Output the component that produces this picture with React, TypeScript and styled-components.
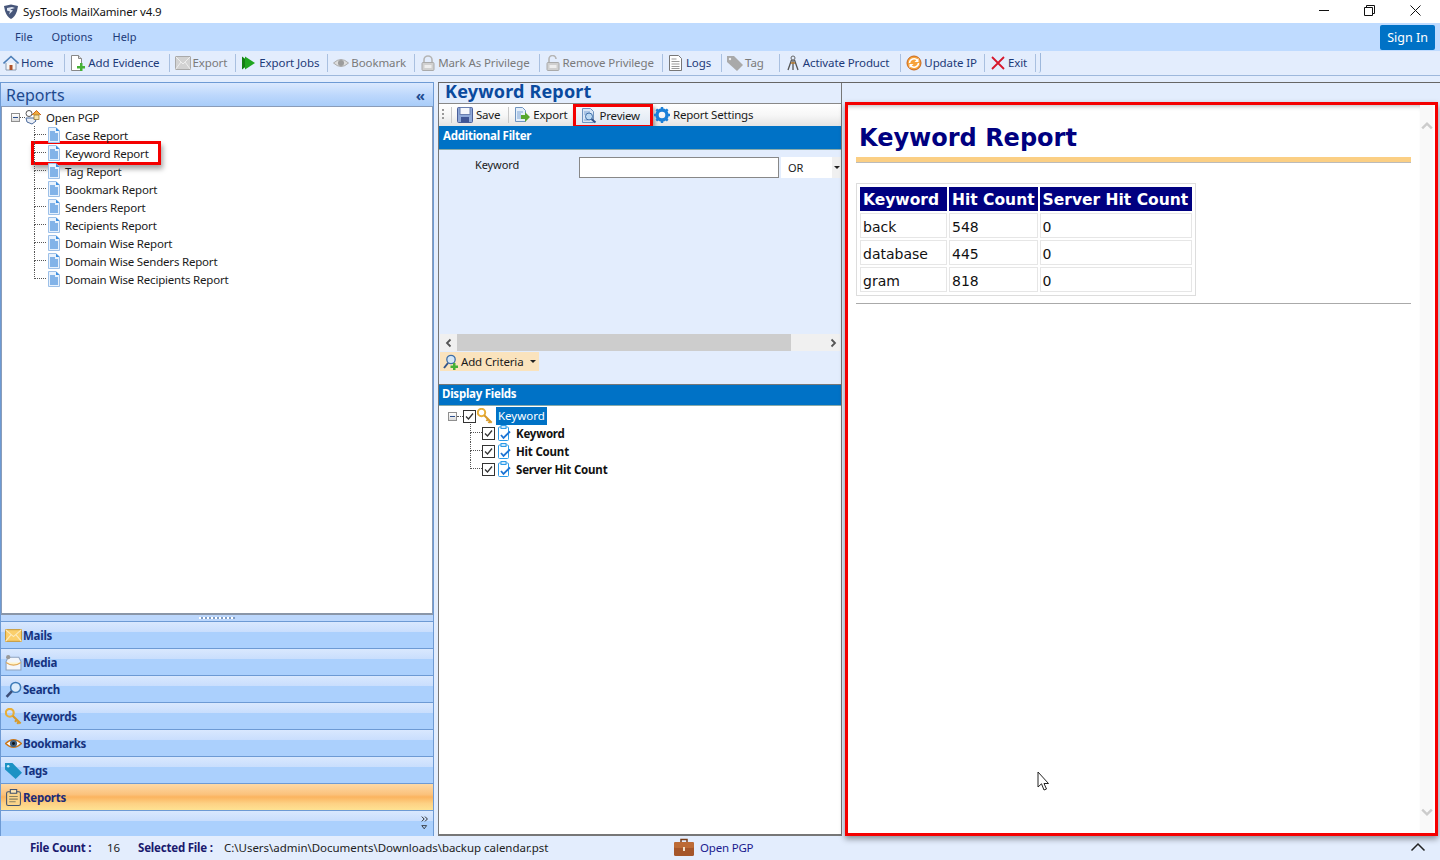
import React from 'react'
import styled, { createGlobalStyle } from 'styled-components'

const Ui = '"Noto Sans", "Open Sans", sans-serif'
const Navy = '#15337f'
const PaleBlue = '#e3edfd'
const Band = '#0072c6'
const Edge = '#6d9ad4'

const GlobalStyle = createGlobalStyle`
  html, body { margin: 0; padding: 0; height: 100%; overflow: hidden; }
  body { font-family: ${Ui}; font-size: 12px; background: ${PaleBlue}; color: #111; }
  #root { height: 100%; }
`

const Window = styled.div`
  position: relative;
  width: 1440px;
  height: 860px;
  display: flex;
  flex-direction: column;
  background: ${PaleBlue};
`

/* title bar */
const TitleBar = styled.div`
  height: 23px;
  flex: none;
  display: flex;
  align-items: center;
  background: #fff;
  padding: 0 2px 0 3px;
`
const TitleText = styled.span`
  margin-left: 4px;
  font-size: 11.5px;
  letter-spacing: -0.13px;
  color: #111;
`
const WindowControls = styled.div`
  margin: -3px 0 0 auto;
  display: flex;
`
const WindowControl = styled.div`
  width: 46px;
  height: 21px;
  display: flex;
  align-items: center;
  justify-content: center;
`

/* menu */
const MenuBar = styled.div`
  height: 28px;
  flex: none;
  display: flex;
  align-items: center;
  background: #bfdbff;
  padding: 0 5px 0 15px;
`
const MenuItem = styled.span<{ $gap: number }>`
  margin: -2px ${(p) => p.$gap}px 0 0;
  font-size: 11px;
  color: #1d3a78;
`
const SignIn = styled.div`
  margin-left: auto;
  width: 55px;
  height: 25px;
  display: flex;
  align-items: center;
  justify-content: center;
  border-radius: 2px;
  background: ${Band};
  color: #fff;
  font-size: 12.5px;
`

/* main toolbar */
const ToolBar = styled.div`
  height: 23px;
  flex: none;
  display: flex;
  align-items: center;
  padding: 0 0 1px 3px;
  border-bottom: 1px solid #9db8dc;
  background: ${PaleBlue};
`
const ToolItem = styled.div<{ $off?: boolean; $pad: number }>`
  display: flex;
  align-items: center;
  gap: 2px;
  height: 18px;
  padding-right: ${(p) => p.$pad}px;
  margin-right: 5px;
  border-right: 1px solid #a9c0e0;
  font-size: 11.5px;
  letter-spacing: -0.1px;
  color: ${(p) => (p.$off ? '#7a7a7a' : '#1d3a78')};
  white-space: nowrap;
`
const ToolBarEnd = styled.div`
  width: 2px;
  height: 20px;
  margin-left: -3px;
  border-right: 1px solid #9db8dc;
  border-radius: 0 0 3px 0;
`

/* workspace */
const Workspace = styled.div`
  flex: 1;
  min-height: 0;
  display: flex;
  padding-top: 6px;
`
const LeftPanel = styled.div`
  width: 434px;
  flex: none;
  display: flex;
  flex-direction: column;
  border-left: 1px solid ${Edge};
  border-right: 1px solid ${Edge};
  box-sizing: border-box;
`
const PanelHeader = styled.div`
  height: 25px;
  flex: none;
  box-sizing: border-box;
  display: flex;
  align-items: center;
  justify-content: space-between;
  padding: 0 8px 0 5px;
  border-top: 1px solid ${Edge};
  border-bottom: 1px solid #8a9cb8;
  background: linear-gradient(#dbe9fe, #bcd7fc 55%, #a9cdf9);
  color: #1e4a8f;
  font-size: 16px;
`
const Collapse = styled.span`
  font-size: 15px;
  font-weight: 700;
  color: #1e4a8f;
`
const TreePane = styled.div`
  flex: 1;
  min-height: 0;
  background: #fff;
  padding: 1px 0 0 9px;
  border-left: 1px solid #8a9cb8;
  border-right: 1px solid #8a9cb8;
  border-bottom: 2px solid #8a96a8;
`
const TreeRow = styled.div<{ $marked?: boolean }>`
  height: 18px;
  display: flex;
  align-items: center;
  width: fit-content;
  white-space: nowrap;
  font-size: 11.5px;
  letter-spacing: -0.2px;
  color: #1a1a1a;
  ${(p) =>
    p.$marked &&
    `
    padding-right: 9px;
    box-shadow: 0 0 0 3px #f40000, 2px 4px 5px 3px rgba(0,0,0,.35);
  `}
`
const ChildList = styled.div<{ $indent: number; $lift?: number }>`
  margin: ${(p) => -(p.$lift ?? 0)}px 0 0 ${(p) => p.$indent}px;
`
const Expander = styled.span`
  width: 9px;
  height: 9px;
  flex: none;
  box-sizing: border-box;
  display: flex;
  align-items: center;
  justify-content: center;
  border: 1px solid #8f8f8f;
  background: linear-gradient(#fff, #dcdcdc);
  &::before {
    content: '';
    width: 5px;
    height: 1px;
    background: #2c4f8c;
  }
`
const Connector = styled.span<{ $last?: boolean; $width: number }>`
  width: ${(p) => p.$width}px;
  height: 18px;
  flex: none;
  &::before {
    content: '';
    display: block;
    box-sizing: border-box;
    height: 9px;
    border-left: 1px dotted #555;
    border-bottom: 1px dotted #555;
  }
  &::after {
    content: '';
    display: ${(p) => (p.$last ? 'none' : 'block')};
    height: 9px;
    border-left: 1px dotted #555;
  }
`
const Dots = styled.span<{ $width: number }>`
  width: ${(p) => p.$width}px;
  height: 0;
  flex: none;
  border-top: 1px dotted #555;
`
const TreeLabel = styled.span<{ $gap: number }>`
  margin-left: ${(p) => p.$gap}px;
`
const Splitter = styled.div`
  height: 6px;
  flex: none;
  display: flex;
  justify-content: center;
  align-items: center;
  background: #bcd7fc;
  &::before {
    content: '';
    width: 36px;
    height: 2px;
    background: repeating-linear-gradient(90deg, #fff 0 2px, #7f9cc4 2px 4px);
  }
`
const NavItem = styled.div<{ $active?: boolean }>`
  height: 27px;
  flex: none;
  box-sizing: border-box;
  display: flex;
  align-items: center;
  gap: 1px;
  padding: 0 0 0 4px;
  border-top: 1px solid ${Edge};
  background: ${(p) =>
    p.$active
      ? 'linear-gradient(#fdd9a6, #fbc27c 40%, #fbb45f 50%, #fdd184 75%, #fee293)'
      : 'linear-gradient(#d9e8fe, #c9defd 38%, #abd0fd 40%, #abd0fd)'};
  font-size: 11.5px;
  font-weight: 700;
  letter-spacing: -0.25px;
  color: ${(p) => (p.$active ? '#1a2a78' : Navy)};
`
const NavOverflow = styled.div`
  height: 26px;
  flex: none;
  box-sizing: border-box;
  display: flex;
  flex-direction: column;
  align-items: flex-end;
  justify-content: flex-end;
  gap: 1px;
  padding: 0 4px 4px 0;
  border-top: 1px solid ${Edge};
  background: linear-gradient(#d9e8fe, #c9defd 38%, #abd0fd 40%, #abd0fd);
`

const RightArea = styled.div`
  flex: 1;
  min-width: 0;
  margin-left: 4px;
  display: flex;
  border-top: 1px solid #666;
`

/* middle column */
const MiddleColumn = styled.div`
  width: 404px;
  flex: none;
  box-sizing: border-box;
  display: flex;
  flex-direction: column;
  border-left: 1px solid #777;
  border-right: 1px solid #777;
  border-bottom: 2px solid #777;
`
const ReportTitle = styled.div`
  height: 20px;
  flex: none;
  padding-left: 6px;
  line-height: 16px;
  font-size: 18px;
  font-weight: 700;
  letter-spacing: 0.18px;
  color: #0a4a9e;
`
const ActionBar = styled.div`
  height: 23px;
  flex: none;
  box-sizing: border-box;
  display: flex;
  align-items: center;
  padding: 0 0 1px 3px;
  border-top: 1px solid #888;
  background: linear-gradient(#fff, #f7f7f7 50%, #e4e4e4);
`
const Grip = styled.span`
  width: 2px;
  height: 11px;
  margin-right: 7px;
  background: repeating-linear-gradient(#9a9a9a 0 2px, transparent 2px 4px);
`
const ActionItem = styled.div<{ $marked?: boolean; $sep?: boolean }>`
  display: flex;
  align-items: center;
  gap: 3px;
  height: 16px;
  white-space: nowrap;
  font-size: 11.5px;
  letter-spacing: -0.2px;
  color: #1a1a1a;
  padding: 0 8px 0 ${(p) => (p.$sep ? 5 : 0)}px;
  ${(p) => p.$sep && 'border-left: 1px solid #c8c8c8;'}
  ${(p) =>
    p.$marked &&
    `
    height: 18px;
    margin: 2px 4px 0 0;
    padding: 0 10px 0 5px;
    background: linear-gradient(#f4f7fb, #dfe8f3);
    box-shadow: 0 0 0 3px #f40000, 2px 3px 4px 3px rgba(0,0,0,.35);
  `}
`
const BlueBand = styled.div<{ $height: number; $inset?: boolean }>`
  height: ${(p) => p.$height}px;
  flex: none;
  box-sizing: border-box;
  padding: ${(p) => (p.$inset ? '2px 0 0 4px' : '1px 0 0 3px')};
  background: ${Band};
  border-bottom: 1px solid #8aa;
  color: #fff;
  font-size: 11.5px;
  font-weight: 700;
  letter-spacing: -0.25px;
`
const FilterArea = styled.div`
  height: 184px;
  flex: none;
  box-sizing: border-box;
  display: flex;
  align-items: flex-start;
  padding: 7px 0 0 36px;
`
const FilterLabel = styled.span`
  width: 104px;
  flex: none;
  font-size: 11px;
  letter-spacing: -0.1px;
  line-height: 16px;
  color: #1a1a1a;
`
const FilterInput = styled.input`
  width: 200px;
  height: 21px;
  flex: none;
  box-sizing: border-box;
  border: 1px solid #888;
  background: #fff;
  outline: none;
`
const FilterSelect = styled.div`
  width: 60px;
  height: 21px;
  flex: none;
  box-sizing: border-box;
  margin-left: 2px;
  padding-left: 7px;
  display: flex;
  align-items: center;
  justify-content: space-between;
  background: #fff;
  font-size: 11px;
  color: #1a1a1a;
`
const SelectArrow = styled.span`
  width: 9px;
  height: 100%;
  display: flex;
  align-items: center;
  justify-content: center;
  background: #f0f0f0;
  &::before {
    content: '';
    border: 3px solid transparent;
    border-top-color: #222;
    border-bottom: 0;
  }
`
const HScroll = styled.div`
  height: 17px;
  flex: none;
  margin: 0 1px;
  display: flex;
  align-items: center;
  background: #f0f0f0;
`
const HScrollThumb = styled.div`
  width: 334px;
  height: 100%;
  background: #cdcdcd;
`
const HScrollEnd = styled.span<{ $end?: boolean }>`
  display: flex;
  align-items: center;
  justify-content: ${(p) => (p.$end ? 'flex-end' : 'center')};
  ${(p) => (p.$end ? 'flex: 1; padding-right: 2px;' : 'width: 17px; flex: none;')}
`
const CriteriaWrap = styled.div`
  height: 34px;
  flex: none;
  box-sizing: border-box;
  padding: 1px 0 0 1px;
  border-bottom: 1px solid #777;
`
const CriteriaButton = styled.div`
  width: 99px;
  height: 19px;
  box-sizing: border-box;
  display: flex;
  align-items: center;
  padding-left: 3px;
  gap: 2px;
  background: #fae3bd;
  font-size: 11.5px;
  letter-spacing: -0.15px;
  color: #1a1a1a;
`
const CaretDown = styled.span`
  margin-left: 5px;
  border: 3px solid transparent;
  border-top-color: #222;
  border-bottom: 0;
`
const FieldsPane = styled.div`
  flex: 1;
  min-height: 0;
  background: #fff;
  padding: 1px 0 0 9px;
`
const Tick = styled.span`
  width: 13px;
  height: 13px;
  flex: none;
  box-sizing: border-box;
  display: flex;
  margin-right: 1px;
  border: 1px solid #333;
  background: #fff;
`
const SelectedLabel = styled.span`
  margin-left: 3px;
  padding: 0 2px;
  height: 18px;
  line-height: 18px;
  letter-spacing: 0;
  background: ${Band};
  color: #fff;
`
const FieldLabel = styled.span`
  margin-left: 4px;
  font-weight: 700;
  font-size: 11.5px;
  color: #111;
`

/* preview */
const PreviewPane = styled.div`
  flex: 1;
  min-width: 0;
  box-sizing: border-box;
  margin: 19px 2px 0 3px;
  display: flex;
  border: 3px solid #f40000;
  background: #fff;
  box-shadow: 0 3px 6px rgba(0, 0, 0, 0.4);
  color: #111;
  font-family: 'DejaVu Sans', Verdana, sans-serif;
`
const Report = styled.div`
  flex: 1;
  min-width: 0;
  padding: 0 9px 0 8px;
  box-shadow: inset 0 5px 5px -4px rgba(0, 0, 0, 0.3);
`
const ReportHeading = styled.h1`
  margin: 0;
  height: 52px;
  box-sizing: border-box;
  padding: 17px 0 0 3px;
  font-size: 24px;
  line-height: 32px;
  font-weight: 700;
  color: #000080;
`
const ReportRule = styled.div`
  height: 5px;
  background: #fbcf84;
  border-bottom: 1px solid #bbb;
  margin-bottom: 20px;
`
const ReportTable = styled.table`
  border: 1px solid #ddd;
  border-spacing: 2px;
  padding: 1px;
  font-size: 14px;
`
const HeadCell = styled.th<{ $width: number }>`
  width: ${(p) => p.$width}px;
  height: 23px;
  padding: 1px 3px 0;
  background: #000080;
  color: #fff;
  font-size: 15.5px;
  font-weight: 700;
  text-align: left;
  white-space: nowrap;
`
const BodyCell = styled.td`
  height: 21px;
  padding: 2px 2px 0;
  border: 1px solid #e6e6e6;
`
const ReportFoot = styled.div`
  height: 1px;
  margin-top: 7px;
  background: #aaa;
`
const VScroll = styled.div`
  width: 13px;
  flex: none;
  box-sizing: content-box;
  margin-right: 2px;
  display: flex;
  flex-direction: column;
  justify-content: space-between;
  align-items: flex-end;
  padding: 15px 0 15px;
  background: #f9f9f9;
`

/* status bar */
const StatusBar = styled.div`
  height: 24px;
  flex: none;
  box-sizing: border-box;
  display: flex;
  align-items: center;
  padding: 0 0 2px 30px;
  font-size: 11.5px;
  letter-spacing: -0.2px;
  color: #1a1a6e;
`
const StatusName = styled.span<{ $width: number }>`
  width: ${(p) => p.$width}px;
  flex: none;
  font-weight: 700;
  white-space: nowrap;
`
const StatusValue = styled.span<{ $width: number }>`
  width: ${(p) => p.$width}px;
  flex: none;
  letter-spacing: -0.03px;
  color: #222;
  white-space: nowrap;
`
const StatusEvidence = styled.span`
  display: flex;
  align-items: center;
  gap: 6px;
  color: #1a1a8e;
`
const StatusChevron = styled.span`
  margin-left: auto;
  margin-right: 14px;
  display: flex;
`
const Pointer = styled.svg`
  position: absolute;
  left: 1037px;
  top: 771px;
`

type IconProps = { size?: number }

const Svg: React.FC<React.PropsWithChildren<IconProps>> = ({ size = 16, children }) => (
  <svg width={size} height={size} viewBox="0 0 16 16" style={{ flex: 'none' }}>
    {children}
  </svg>
)

const Shield = () => (
  <Svg>
    <path d="M1 2l7-1.500 7 1.500-1 5q-2 6-6 8-4-2-6-8z" fill="#47567a" />
    <path d="M4 4l5-1 3 1-5 1.500 3 1-4 4 1-3-3-1z" fill="#dfe6f2" />
  </Svg>
)
const HomeIcon = () => (
  <Svg>
    <path d="M3 8v7h10V8" fill="#f5f5f5" stroke="#8b9bb0" />
    <path d="M.5 8.500L8 1.500l7.500 7" fill="none" stroke="#4d7fb8" strokeWidth="1.600" />
    <rect x="6.500" y="10" width="3" height="5" fill="#b0522a" />
  </Svg>
)
const PageAdd = () => (
  <Svg>
    <path d="M1.500.500h7l3 3v12h-10z" fill="#fff" stroke="#888" />
    <path d="M8.500.500v3h3" fill="#ddd" stroke="#888" />
    <path d="M10 8v3H7v2.500h3V16h2.500v-2.500H15V11h-2.500V8z" fill="#45b035" />
  </Svg>
)
const MailOff = () => (
  <Svg>
    <rect x=".5" y="1.500" width="15" height="13" fill="#d2d2d2" stroke="#aaa" />
    <path d="M.5 1.500L8 9l7.500-7.500M.5 14.500L6 7M15.500 14.500L10 7" fill="none" stroke="#eee" />
  </Svg>
)
const PlayJobs = () => (
  <Svg>
    <path d="M1 1.500v13l4-3V4.500z" fill="#127f12" />
    <path d="M4 1.500v13l10-6.500z" fill="#1fa51f" />
  </Svg>
)
const EyeOff = () => (
  <Svg>
    <path d="M.5 8Q8 1 15.500 8 8 15 .5 8z" fill="#ddd" stroke="#aaa" />
    <circle cx="8" cy="8" r="3" fill="#9c9c9c" />
  </Svg>
)
const LockOff: React.FC<{ open?: boolean }> = ({ open }) => (
  <Svg>
    <path d={open ? 'M4 8V4a3.500 3.500 0 0 1 7 0' : 'M4 8V5a4 4 0 0 1 8 0v3'} fill="none" stroke="#b5b5b5" strokeWidth="1.600" />
    <rect x="2" y="7.500" width="12" height="8" rx="1" fill="#d0d0d0" stroke="#aaa" />
    <rect x="4.500" y="10" width="7" height="3" fill="#eee" />
  </Svg>
)
const LogIcon = () => (
  <Svg>
    <path d="M1.500.500h9l3 3v12h-12z" fill="#fff" stroke="#777" />
    <path d="M3.500 4h5M3.500 6.500h8M3.500 9h8M3.500 11.500h8M3.500 13.500h8" stroke="#999" />
  </Svg>
)
const TagOff = () => (
  <Svg>
    <path d="M0 1h7l9 9-6 6-10-9z" fill="#a9a9a9" />
    <circle cx="3" cy="4" r="1.200" fill="#eee" />
  </Svg>
)
const Activate = () => (
  <Svg>
    <circle cx="8" cy="3" r="2" fill="none" stroke="#666" />
    <path d="M6.500 5L3 15M9.500 5L13 15M8 5v10" stroke="#555" strokeWidth="1.300" />
    <path d="M6 8h4" stroke="#b87a2a" strokeWidth="1.500" />
  </Svg>
)
const UpdateIcon = () => (
  <Svg>
    <circle cx="8" cy="8" r="7" fill="#f6a33b" stroke="#c9661a" />
    <path d="M3.500 8A4.500 4.500 0 0 1 11.500 5.500M12.500 8A4.500 4.500 0 0 1 4.500 10.500" fill="none" stroke="#fff" strokeWidth="1.500" />
    <path d="M12.500 3v4h-4zM3.500 13V9h4z" fill="#fff" />
  </Svg>
)
const ExitIcon = () => (
  <Svg>
    <path d="M2 2l12 12M14 2L2 14" stroke="#d6182c" strokeWidth="1.800" />
  </Svg>
)
const SaveIcon = () => (
  <Svg>
    <rect x=".5" y=".5" width="15" height="15" rx="1" fill="#8ea8d8" stroke="#4a5f9a" />
    <rect x="3" y=".5" width="10" height="7" fill="#f5f7fb" stroke="#6a7fb0" />
    <rect x="4" y="10" width="8" height="5.500" fill="#3f5595" />
  </Svg>
)
const ExportIcon = () => (
  <Svg>
    <path d="M1.500.500h7l3 3v11h-10z" fill="#e4effb" stroke="#6f94c0" />
    <path d="M3 5h6M3 7h4M3 9h4M3 11h4" stroke="#7ea4d4" />
    <path d="M7 8h4V5l5 5-5 5v-3H7z" fill="#58a82e" />
  </Svg>
)
const PreviewIcon = () => (
  <Svg>
    <path d="M1.500.500h8l3 3v11h-11z" fill="#d8e6f6" stroke="#6f94c0" />
    <path d="M3 4h6M3 6h3M3 12h4" stroke="#7ea4d4" />
    <circle cx="8" cy="8.500" r="3.500" fill="#bcd9f2" stroke="#3d6ea8" />
    <path d="M10.500 11l4 3.500" stroke="#34558a" strokeWidth="2" />
  </Svg>
)
const GearIcon = () => (
  <Svg>
    <circle cx="8" cy="8" r="5" fill="none" stroke="#1b80d8" strokeWidth="3.400" />
    <path
      d="M8 0v3M8 13v3M0 8h3M13 8h3M2.300 2.300l2.100 2.100M11.600 11.600l2.100 2.100M13.700 2.300l-2.100 2.100M4.400 11.600l-2.100 2.100"
      stroke="#1b80d8"
      strokeWidth="2.400"
    />
  </Svg>
)
const EvidenceHome = () => (
  <Svg>
    <circle cx="4" cy="4.500" r="3" fill="#fff" stroke="#555" />
    <path d="M1 9h8l2 3-4 3-5-2z" fill="#e9eef6" stroke="#4b6a9c" />
    <path d="M7 6l4.500-4.500L16 6" fill="#f0ab3c" stroke="#c9661a" />
    <rect x="9" y="6" width="5" height="4.500" fill="#f6e3a9" stroke="#8a6a2a" strokeWidth=".7" />
  </Svg>
)
const ReportDoc = () => (
  <Svg>
    <path d="M2.500.500h7.500l3.500 3.500v11.500h-11z" fill="#e8f2fd" stroke="#9dc0e8" />
    <path d="M10 .5v3.500h3.500" fill="#3d8fe0" />
    <path d="M4 5h5M4 7h8M4 9h8M4 11h8M4 13h8" stroke="#1d74d4" strokeWidth="1.100" />
  </Svg>
)
const KeyIcon: React.FC<IconProps> = ({ size = 16 }) => (
  <Svg size={size}>
    <circle cx="4.500" cy="4.500" r="3.700" fill="none" stroke="#e8ae36" strokeWidth="2" />
    <path d="M7.200 7.200l7.500 7.500M11 11l-1.500 2M13 13l-1.500 2" stroke="#d89a2a" strokeWidth="2" />
  </Svg>
)
const ClipTick = () => (
  <Svg>
    <rect x="2.500" y="2" width="10" height="13.500" rx="1" fill="#fff" stroke="#2d9be8" />
    <rect x="5" y=".5" width="5" height="3" fill="#cfe8fb" stroke="#2d9be8" />
    <path d="M5 10l2.500 3L14 6.500" fill="none" stroke="#1d74d4" strokeWidth="1.800" />
  </Svg>
)
const MailNav = () => (
  <Svg size={17}>
    <rect x=".5" y="2.500" width="15" height="11" fill="#fbcf6c" stroke="#c99a3a" />
    <path d="M.5 2.500L8 9l7.500-6.500M.5 13.500L6 7M15.500 13.500L10 7" fill="none" stroke="#fdecc0" />
  </Svg>
)
const MediaNav = () => (
  <Svg size={17}>
    <path d="M1 7l2-4h10l2 4v8H1z" fill="#f3f6fb" stroke="#8fa3c0" />
    <path d="M1 8q7 5 14 0" fill="#fff3c8" stroke="#e0a858" />
    <circle cx="3" cy="3" r="2" fill="#999" />
  </Svg>
)
const SearchNav = () => (
  <Svg size={17}>
    <circle cx="10" cy="6" r="4.700" fill="#dcecfb" stroke="#3d7bb8" strokeWidth="1.400" />
    <path d="M6.500 9.500L1.500 15" stroke="#3c4e78" strokeWidth="2.400" />
  </Svg>
)
const EyeNav = () => (
  <Svg size={17}>
    <path d="M.5 8Q8 1 15.500 8 8 15 .5 8z" fill="#fff" stroke="#c9761a" strokeWidth="1.300" />
    <circle cx="8" cy="8" r="3.400" fill="#42607e" />
    <circle cx="8" cy="8" r="1.400" fill="#111" />
  </Svg>
)
const TagNav = () => (
  <Svg size={17}>
    <path d="M0 1h7l9 9-6 6-10-9z" fill="#1c92c4" />
    <circle cx="3" cy="4" r="1.200" fill="#cdeaf6" />
  </Svg>
)
const ClipboardNav = () => (
  <Svg size={17}>
    <rect x="1.500" y="2.500" width="13" height="13" rx="1.500" fill="#fbd489" stroke="#44546e" />
    <rect x="5" y=".5" width="6" height="3.500" fill="#fde6b5" stroke="#44546e" />
    <path d="M4 7h8M4 9.500h8M4 12h6" stroke="#8a8060" />
  </Svg>
)
const Briefcase = () => (
  <svg width="20" height="18" viewBox="0 0 20 18" style={{ flex: 'none' }}>
    <path d="M7 4V1.500h6V4" fill="none" stroke="#7a3d18" strokeWidth="1.500" />
    <rect x="0" y="4" width="20" height="14" rx="1.500" fill="#a5562a" />
    <rect x="0" y="4" width="20" height="6" rx="1.500" fill="#bd6b36" />
    <rect x="9" y="9" width="2" height="4" fill="#f0e0c8" />
  </svg>
)
const AddCriteriaIcon = () => (
  <Svg>
    <circle cx="8" cy="5.500" r="4.200" fill="#d4e6f6" stroke="#3d6ea8" strokeWidth="1.300" />
    <path d="M5 9l-4 5" stroke="#34558a" strokeWidth="2" />
    <path d="M10 9v2.500H7.500V14H10v2h2.500v-2H15v-2.500h-2.500V9z" fill="#45b035" />
  </Svg>
)
const TickMark = () => (
  <svg width="11" height="11" viewBox="0 0 11 11">
    <path d="M2 5.500l2.500 2.500L9 2.500" fill="none" stroke="#333" strokeWidth="1.300" />
  </svg>
)
const Chevron: React.FC<{ d: string; color?: string; width?: number; size?: number }> = ({ d, color = '#555', width = 1.800, size = 10 }) => (
  <svg width={size} height={size} viewBox="0 0 10 10" style={{ flex: 'none' }}>
    <path d={d} fill="none" stroke={color} strokeWidth={width} />
  </svg>
)

const reports = [
  'Case Report',
  'Keyword Report',
  'Tag Report',
  'Bookmark Report',
  'Senders Report',
  'Recipients Report',
  'Domain Wise Report',
  'Domain Wise Senders Report',
  'Domain Wise Recipients Report',
]

const navItems: { label: string; icon: React.ReactNode; active?: boolean }[] = [
  { label: 'Mails', icon: <MailNav /> },
  { label: 'Media', icon: <MediaNav /> },
  { label: 'Search', icon: <SearchNav /> },
  { label: 'Keywords', icon: <KeyIcon size={17} /> },
  { label: 'Bookmarks', icon: <EyeNav /> },
  { label: 'Tags', icon: <TagNav /> },
  { label: 'Reports', icon: <ClipboardNav />, active: true },
]

const toolItems: { label: string; icon: React.ReactNode; off?: boolean; pad: number }[] = [
  { label: 'Home', icon: <HomeIcon />, pad: 11 },
  { label: 'Add Evidence', icon: <PageAdd />, pad: 9 },
  { label: 'Export', icon: <MailOff />, off: true, pad: 8 },
  { label: 'Export Jobs', icon: <PlayJobs />, pad: 8 },
  { label: 'Bookmark', icon: <EyeOff />, off: true, pad: 8 },
  { label: 'Mark As Privilege', icon: <LockOff />, off: true, pad: 9 },
  { label: 'Remove Privilege', icon: <LockOff open />, off: true, pad: 8 },
  { label: 'Logs', icon: <LogIcon />, pad: 10 },
  { label: 'Tag', icon: <TagOff />, off: true, pad: 15 },
  { label: 'Activate Product', icon: <Activate />, pad: 11 },
  { label: 'Update IP', icon: <UpdateIcon />, pad: 7 },
  { label: 'Exit', icon: <ExitIcon />, pad: 8 },
]

const rows = [
  ['back', '548', '0'],
  ['database', '445', '0'],
  ['gram', '818', '0'],
]

export default function App() {
  return (
    <Window>
      <GlobalStyle />
      <TitleBar>
        <Shield />
        <TitleText>SysTools MailXaminer v4.9</TitleText>
        <WindowControls>
          <WindowControl>
            <svg width="11" height="11" viewBox="0 0 11 11">
              <path d="M1 5.500h10" stroke="#111" />
            </svg>
          </WindowControl>
          <WindowControl>
            <svg width="11" height="11" viewBox="0 0 11 11">
              <path d="M.5 2.500h8v8h-8zM2.500 2.500v-2h8v8h-2" fill="none" stroke="#111" />
            </svg>
          </WindowControl>
          <WindowControl>
            <svg width="11" height="11" viewBox="0 0 11 11">
              <path d="M.5.500l10 10M10.500.500l-10 10" stroke="#111" />
            </svg>
          </WindowControl>
        </WindowControls>
      </TitleBar>

      <MenuBar>
        <MenuItem $gap={19}>File</MenuItem>
        <MenuItem $gap={20}>Options</MenuItem>
        <MenuItem $gap={0}>Help</MenuItem>
        <SignIn>Sign In</SignIn>
      </MenuBar>

      <ToolBar>
        {toolItems.map((t) => (
          <ToolItem key={t.label} $off={t.off} $pad={t.pad}>
            {t.icon}
            {t.label}
          </ToolItem>
        ))}
        <ToolBarEnd />
      </ToolBar>

      <Workspace>
        <LeftPanel>
          <PanelHeader>
            Reports
            <Collapse>«</Collapse>
          </PanelHeader>
          <TreePane>
            <TreeRow>
              <Expander />
              <Dots $width={5} />
              <EvidenceHome />
              <TreeLabel $gap={5}>Open PGP</TreeLabel>
            </TreeRow>
            <ChildList $indent={23}>
              {reports.map((r, i) => (
                <TreeRow key={r} $marked={r === 'Keyword Report'}>
                  <Connector $last={i === reports.length - 1} $width={12} />
                  <ReportDoc />
                  <TreeLabel $gap={3}>{r}</TreeLabel>
                </TreeRow>
              ))}
            </ChildList>
          </TreePane>
          <Splitter />
          {navItems.map((n) => (
            <NavItem key={n.label} $active={n.active}>
              {n.icon}
              {n.label}
            </NavItem>
          ))}
          <NavOverflow>
            <Chevron d="M1 2l3 3-3 3M5 2l3 3-3 3" color="#222" width={1.200} size={8} />
            <Chevron d="M1 2h6L4 6z" color="#222" width={1} size={8} />
          </NavOverflow>
        </LeftPanel>

        <RightArea>
          <MiddleColumn>
            <ReportTitle>Keyword Report</ReportTitle>
            <ActionBar>
              <Grip />
              <ActionItem $sep>
                <SaveIcon />
                Save
              </ActionItem>
              <ActionItem $sep>
                <ExportIcon />
                Export
              </ActionItem>
              <ActionItem $marked>
                <PreviewIcon />
                Preview
              </ActionItem>
              <ActionItem>
                <GearIcon />
                Report Settings
              </ActionItem>
            </ActionBar>
            <BlueBand $height={24} $inset>
              Additional Filter
            </BlueBand>
            <FilterArea>
              <FilterLabel>Keyword</FilterLabel>
              <FilterInput aria-label="Keyword" />
              <FilterSelect>
                OR
                <SelectArrow />
              </FilterSelect>
            </FilterArea>
            <HScroll>
              <HScrollEnd>
                <Chevron d="M6.500 1.500L3 5l3.500 3.500" />
              </HScrollEnd>
              <HScrollThumb />
              <HScrollEnd $end>
                <Chevron d="M3.500 1.500L7 5 3.500 8.500" />
              </HScrollEnd>
            </HScroll>
            <CriteriaWrap>
              <CriteriaButton>
                <AddCriteriaIcon />
                Add Criteria
                <CaretDown />
              </CriteriaButton>
            </CriteriaWrap>
            <BlueBand $height={21}>Display Fields</BlueBand>
            <FieldsPane>
              <TreeRow>
                <Expander />
                <Dots $width={6} />
                <Tick>
                  <TickMark />
                </Tick>
                <KeyIcon />
                <SelectedLabel>Keyword</SelectedLabel>
              </TreeRow>
              <ChildList $indent={22} $lift={1}>
                {['Keyword', 'Hit Count', 'Server Hit Count'].map((f, i) => (
                  <TreeRow key={f}>
                    <Connector $last={i === 2} $width={12} />
                    <Tick>
                      <TickMark />
                    </Tick>
                    <ClipTick />
                    <FieldLabel>{f}</FieldLabel>
                  </TreeRow>
                ))}
              </ChildList>
            </FieldsPane>
          </MiddleColumn>

          <PreviewPane>
            <Report>
              <ReportHeading>Keyword Report</ReportHeading>
              <ReportRule />
              <ReportTable>
                <thead>
                  <tr>
                    <HeadCell $width={81}>Keyword</HeadCell>
                    <HeadCell $width={82}>Hit Count</HeadCell>
                    <HeadCell $width={146}>Server Hit Count</HeadCell>
                  </tr>
                </thead>
                <tbody>
                  {rows.map((r) => (
                    <tr key={r[0]}>
                      {r.map((c, i) => (
                        <BodyCell key={i}>{c}</BodyCell>
                      ))}
                    </tr>
                  ))}
                </tbody>
              </ReportTable>
              <ReportFoot />
            </Report>
            <VScroll>
              <Chevron d="M1 7l4-4 4 4" color="#ccc" width={2} size={12} />
              <Chevron d="M1 3l4 4 4-4" color="#ccc" width={2} size={12} />
            </VScroll>
          </PreviewPane>
        </RightArea>
      </Workspace>

      <StatusBar>
        <StatusName $width={77}>File Count :</StatusName>
        <StatusValue $width={31}>16</StatusValue>
        <StatusName $width={86}>Selected File :</StatusName>
        <StatusValue $width={450}>C:\Users\admin\Documents\Downloads\backup calendar.pst</StatusValue>
        <StatusEvidence>
          <Briefcase />
          Open PGP
        </StatusEvidence>
        <StatusChevron>
          <svg width="16" height="10" viewBox="0 0 16 10">
            <path d="M1.500 8.500L8 2l6.500 6.500" fill="none" stroke="#222" strokeWidth="1.500" />
          </svg>
        </StatusChevron>
      </StatusBar>

      <Pointer width="13" height="20" viewBox="0 0 13 20">
        <path d="M1 1v15l3.500-3.200L7 19l2.500-1-2.500-5.500h4.500z" fill="#fff" stroke="#222" />
      </Pointer>
    </Window>
  )
}
